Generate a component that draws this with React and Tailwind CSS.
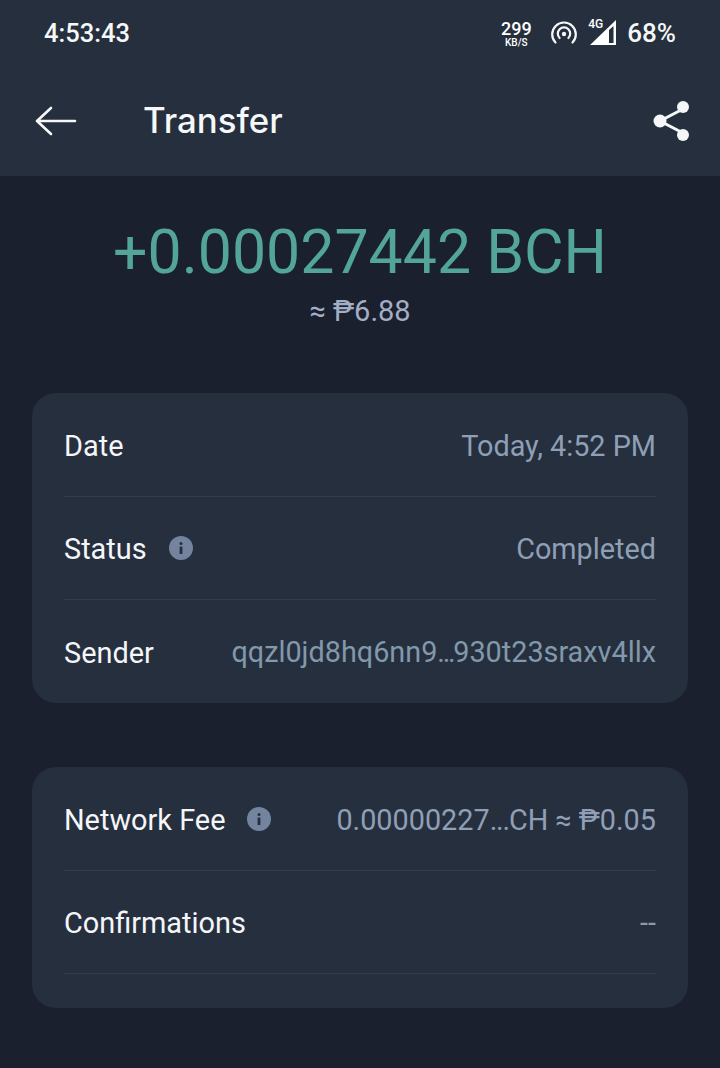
const font = { fontFamily: "Roboto, 'Noto Sans', sans-serif" };

function Info() {
  return (
    <svg width="24" height="24" viewBox="0 0 24 24" className="shrink-0">
      <circle cx="12" cy="12" r="12" fill="#74849f" />
      <circle cx="12" cy="7.6" r="1.5" fill="#262f3e" />
      <rect x="10.6" y="10.6" width="2.8" height="7.4" fill="#262f3e" />
    </svg>
  );
}

function Row({ label, info, value, valueClass = "text-[#8f9fb5]", divider = true }) {
  return (
    <div className={`h-[103px] pt-[3px] flex items-center justify-between ${divider ? "border-b border-[#323c4b]" : ""}`}>
      <div className="flex items-center">
        <span className="text-[28.9px] text-[#f4f6f9] leading-none">{label}</span>
        {info && <span className="ml-[22px] flex -mt-1"><Info /></span>}
      </div>
      <span className={`text-[28.8px] leading-none whitespace-nowrap ${valueClass}`}>{value}</span>
    </div>
  );
}

export default function App() {
  return (
    <div className="w-[720px] h-[1068px] bg-[#1a202e] overflow-hidden" style={font}>
      <header className="h-[176px] bg-[#252f3d] flex flex-col">
        <div className="h-[66px] pl-[44px] pr-[44px] flex items-center justify-between text-white">
          <span className="text-[25.5px] font-medium text-[#f6f7f9]">4:53:43</span>
          <div className="flex items-center">
            <div className="flex flex-col items-center w-[30px] mr-[19px] mt-[1px]">
              <span className="text-[18px] font-medium leading-[18px]">299</span>
              <span className="text-[10px] font-medium leading-[10px]">KB/S</span>
            </div>
            <svg width="28" height="24" viewBox="0 0 28 24" fill="none" stroke="#f6f7f9" strokeWidth="2.2" strokeLinecap="round" className="mr-[12px]">
              <path d="M5.5 21.5 A11.8 11.8 0 1 1 22.5 21.5" />
              <path d="M9.6 17 A6.2 6.2 0 1 1 18.4 17" />
              <circle cx="14" cy="13" r="2.2" fill="#f6f7f9" stroke="none" />
            </svg>
            <div className="relative w-[28px] h-[26px] mr-[9px]">
              <svg width="28" height="26" viewBox="0 0 28 26" className="absolute left-0 top-0">
                <path d="M0 25 L26 0 L26 25 Z" fill="#ffffff" />
                <path d="M19 10 L23.5 6 L23.5 23 L19 23 Z" fill="#252f3d" />
              </svg>
              <span className="absolute -left-[2px] -top-[2px] text-[12px] font-medium leading-none">4G</span>
            </div>
            <span className="text-[26px] font-medium text-[#f6f7f9] leading-none">68%</span>
          </div>
        </div>
        <div className="flex-1 flex items-center pl-[35px] pr-[28px] -mt-[1px]">
          <svg width="42" height="32" viewBox="0 0 42 32" fill="none" stroke="#f6f7f9" strokeWidth="2.6" strokeLinecap="round" strokeLinejoin="round">
            <path d="M40 16 H2 M16 3 L2 16 L16 29" />
          </svg>
          <span className="ml-[66px] text-[34.8px] font-medium text-[#f6f7f9] leading-none" style={{ fontFamily: "Inter, Roboto, sans-serif" }}>Transfer</span>
          <svg width="40" height="42" viewBox="0 0 40 42" className="ml-auto" fill="#f6f7f9" stroke="#f6f7f9">
            <path d="M31 9 L8 21 L31 33" fill="none" strokeWidth="3" />
            <circle cx="31" cy="7" r="6" stroke="none" />
            <circle cx="8" cy="21" r="6.5" stroke="none" />
            <circle cx="31" cy="35" r="6" stroke="none" />
          </svg>
        </div>
      </header>

      <section className="flex flex-col items-center">
        <div className="mt-[42px] text-[60.8px] leading-[70px] text-[#52a598]">+0.00027442 BCH</div>
        <div className="mt-[7px] text-[29px] leading-[32px] text-[#a3aec4]">≈ ₱6.88</div>
      </section>

      <main className="px-[32px] mt-[66px] flex flex-col gap-[64px]">
        <div className="h-[310px] pt-px bg-[#262f3e] rounded-[24px] px-[32px]">
          <Row label="Date" value="Today, 4:52 PM" />
          <Row label="Status" info value="Completed" />
          <Row
            label="Sender"
            value={<>qqzl0jd8hq6nn9<span className="tracking-[-0.08em]">...</span>930t23sraxv4llx</>}
            valueClass="text-[#8298ab] -mt-[2px]"
            divider={false}
          />
        </div>
        <div className="h-[241px] pt-px bg-[#262f3e] rounded-[24px] px-[32px]">
          <Row
            label="Network Fee"
            info
            value={<>0.00000227<span className="tracking-[-0.04em]">...</span>CH ≈ ₱0.05</>}
          />
          <Row label="Confirmations" value="--" valueClass="text-[#8e98ac]" />
        </div>
      </main>
    </div>
  );
}
